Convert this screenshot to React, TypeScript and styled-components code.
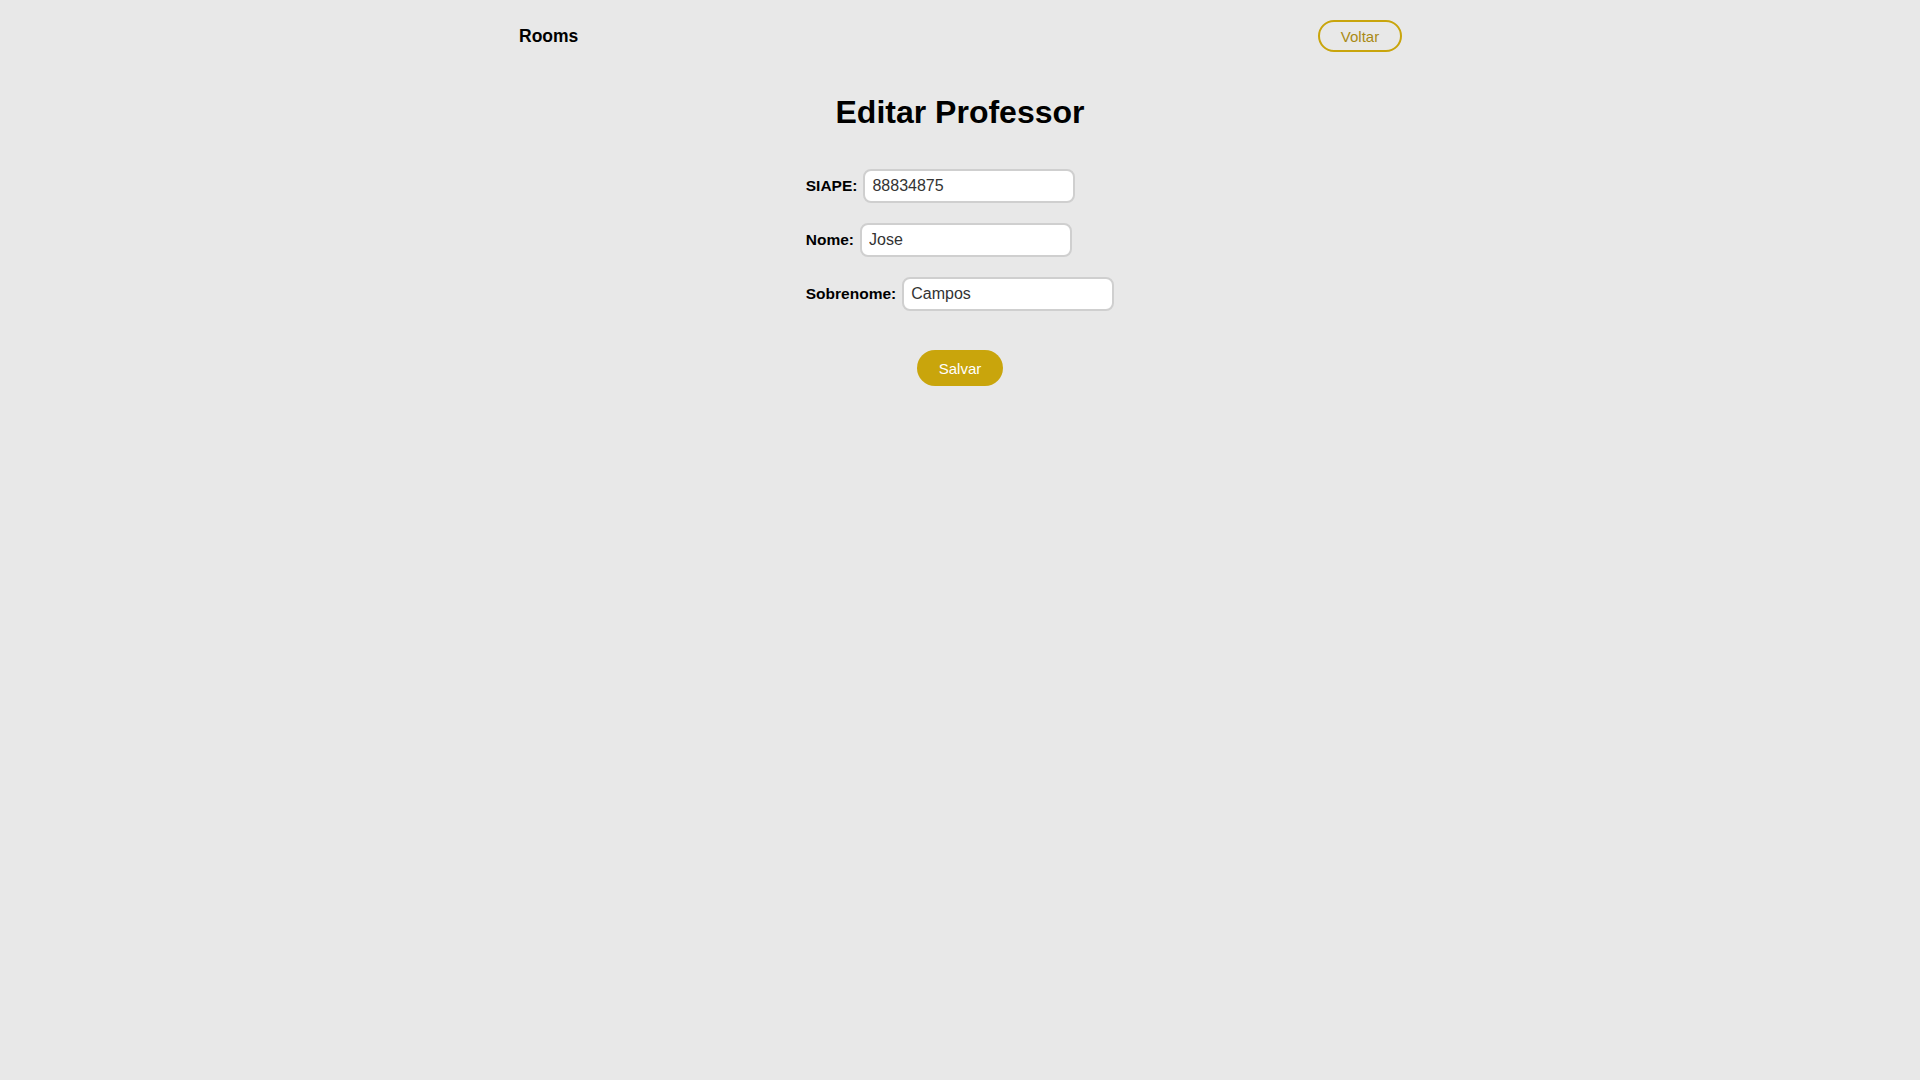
import React from "react";
import styled, { createGlobalStyle } from "styled-components";

const GOLD = "#c9a50c";

const Global = createGlobalStyle`
  html, body {
    margin: 0;
    padding: 0;
    background: #e8e8e8;
    font-family: "Liberation Sans", Arial, sans-serif;
    color: #000;
  }
`;

const Page = styled.div`
  min-height: 100vh;
  background: #e8e8e8;
`;

const Header = styled.header`
  max-width: 884px;
  margin: 0 auto;
  padding: 20px 0 0;
  display: flex;
  align-items: center;
  justify-content: space-between;
`;

const Brand = styled.div`
  font-size: 17.5px;
  font-weight: bold;
  padding-left: 1px;
`;

const OutlineButton = styled.button`
  box-sizing: border-box;
  width: 84px;
  height: 32px;
  border: 2px solid ${GOLD};
  border-radius: 16px;
  background: transparent;
  color: #a88a14;
  font-family: "Liberation Sans", Arial, sans-serif;
  font-size: 15px;
  padding: 0;
  cursor: pointer;
`;

const Main = styled.main`
  display: flex;
  flex-direction: column;
  align-items: center;
`;

const Title = styled.h1`
  font-size: 32px;
  font-weight: bold;
  margin: 42px 0 38px;
`;

const Form = styled.form`
  display: flex;
  flex-direction: column;
  align-items: center;
`;

const Fields = styled.div`
  display: flex;
  flex-direction: column;
  align-items: flex-start;
  gap: 20px;
`;

const Row = styled.div`
  display: flex;
  align-items: center;
  gap: 6px;
`;

const Label = styled.label`
  font-size: 15.5px;
  font-weight: bold;
`;

const Input = styled.input`
  box-sizing: border-box;
  width: 212px;
  height: 34px;
  border: 2px solid #cfcfcf;
  border-radius: 8px;
  padding: 0 7px;
  background: #fff;
  color: #333;
  font-family: "Liberation Sans", Arial, sans-serif;
  font-size: 16px;
  outline: none;
`;

const SaveButton = styled.button`
  box-sizing: border-box;
  margin-top: 39px;
  width: 86px;
  height: 36px;
  border: none;
  border-radius: 18px;
  background: ${GOLD};
  color: #fff;
  font-family: "Liberation Sans", Arial, sans-serif;
  font-size: 15px;
  cursor: pointer;
`;

export default function App() {
  return (
    <Page>
      <Global />
      <Header>
        <Brand>Rooms</Brand>
        <OutlineButton type="button">Voltar</OutlineButton>
      </Header>
      <Main>
        <Title>Editar Professor</Title>
        <Form onSubmit={(e) => e.preventDefault()}>
          <Fields>
            <Row>
              <Label htmlFor="siape">SIAPE:</Label>
              <Input id="siape" defaultValue="88834875" />
            </Row>
            <Row>
              <Label htmlFor="nome">Nome:</Label>
              <Input id="nome" defaultValue="Jose" />
            </Row>
            <Row>
              <Label htmlFor="sobrenome">Sobrenome:</Label>
              <Input id="sobrenome" defaultValue="Campos" />
            </Row>
          </Fields>
          <SaveButton type="submit">Salvar</SaveButton>
        </Form>
      </Main>
    </Page>
  );
}
